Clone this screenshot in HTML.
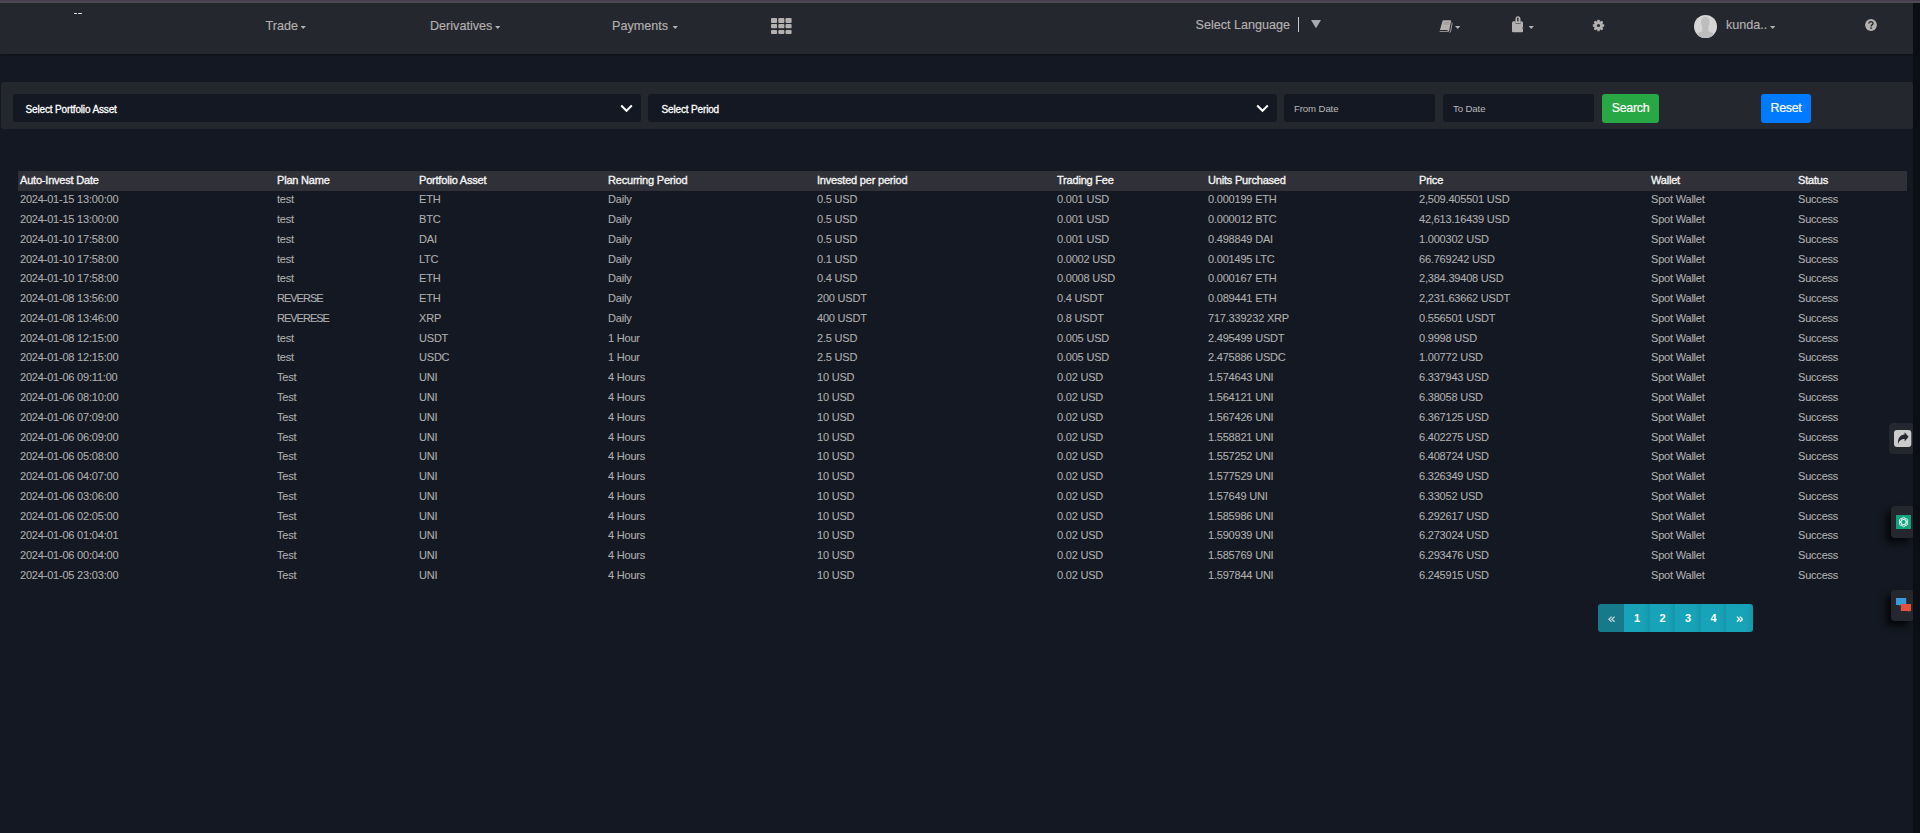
<!DOCTYPE html>
<html><head><meta charset="utf-8"><style>
*{box-sizing:border-box;margin:0;padding:0}
html,body{width:1920px;height:833px;overflow:hidden;background:#141822;font-family:"Liberation Sans",sans-serif}
.abs{position:absolute}
.nt{position:absolute;font-size:12.6px;color:#b4b0b0;white-space:nowrap;line-height:14px;-webkit-text-stroke:0.15px #b4b0b0}
.caret{position:absolute;width:5.4px;height:3px;background:#b4b0b0;clip-path:polygon(0 0,100% 0,50% 100%)}
.sel{position:absolute;top:94px;height:28px;background:#141822;border-radius:3px}
.selt{position:absolute;top:103.5px;font-size:10px;font-weight:normal;-webkit-text-stroke:0.3px #fff;color:#fff;white-space:nowrap;line-height:12px;letter-spacing:-0.15px}
.inpt{position:absolute;top:102.5px;font-size:9.6px;color:#b8b8b8;white-space:nowrap;line-height:12px;letter-spacing:-0.1px}
.btn{position:absolute;top:94px;height:29px;border-radius:3px;color:#fff;font-size:12.4px;line-height:29px;text-align:center;letter-spacing:-0.3px;-webkit-text-stroke:0.2px #fff}
.thead{position:absolute;left:18px;top:171px;width:1889px;height:20px;background:#2f3038}
.thead span{position:absolute;top:3px;font-size:11px;font-weight:normal;-webkit-text-stroke:0.35px #f4f4f4;color:#f4f4f4;white-space:nowrap;letter-spacing:-0.2px;line-height:13px}
.tr{position:absolute;left:0;width:1900px;height:20px}
.tr span{position:absolute;top:3px;font-size:11px;color:#aeaeae;-webkit-text-stroke:0.1px #aeaeae;white-space:nowrap;letter-spacing:-0.2px;line-height:13px}
#pag{position:absolute;left:1598px;top:604px;width:155px;height:28px;border-radius:3px;overflow:hidden}
#pag div{position:absolute;top:0;height:28px;background:linear-gradient(90deg,#17a3b9 0%,#17a2b8 75%,#1596aa 100%);color:#fff;font-size:11px;text-align:center;line-height:28px;font-weight:bold}
#pag div.d{background:#167a8a}
.side{position:absolute;background:#24272e;border-radius:4px}
</style></head><body>
<div class="abs" style="left:0;top:0;width:1920px;height:1px;background:#463a4f"></div>
<div class="abs" style="left:0;top:1px;width:1920px;height:2px;background:#4d4951"></div>
<div class="abs" style="left:0;top:3px;width:1913px;height:51px;background:#24272e;box-shadow:0 1px 2px rgba(0,0,0,.35)"></div>
<div class="abs" style="left:1px;top:82px;width:1912px;height:47px;background:#24272e;border-radius:3px"></div>
<div class="abs" style="left:74px;top:12.8px;width:3.2px;height:1.4px;background:#e8e8e8;border-radius:0.7px"></div><div class="abs" style="left:78.3px;top:12.8px;width:3.5px;height:1.4px;background:#e8e8e8;border-radius:0.7px"></div>
<div class="nt" style="left:265.5px;top:19px">Trade</div><div class="caret" style="left:300.5px;top:26px"></div>
<div class="nt" style="left:430px;top:19px">Derivatives</div><div class="caret" style="left:495px;top:26px"></div>
<div class="nt" style="left:612px;top:19px">Payments</div><div class="caret" style="left:672.5px;top:26px"></div>
<svg class="abs" style="left:770.5px;top:17.9px" width="22" height="17" viewBox="0 0 22 17"><g fill="#b4b0b0"><rect x="0" y="0" width="6.1" height="5" rx="1"/><rect x="7.3" y="0" width="6.1" height="5" rx="1"/><rect x="14.5" y="0" width="6.1" height="5" rx="1"/><rect x="0" y="6" width="6.1" height="4.2" rx="1"/><rect x="7.3" y="6" width="6.1" height="4.2" rx="1"/><rect x="14.5" y="6" width="6.1" height="4.2" rx="1"/><rect x="0" y="11.9" width="6.1" height="4.2" rx="1"/><rect x="7.3" y="11.9" width="6.1" height="4.2" rx="1"/><rect x="14.5" y="11.9" width="6.1" height="4.2" rx="1"/></g></svg>
<div class="nt" style="left:1195.5px;top:18px">Select Language</div>
<div class="abs" style="left:1298px;top:17px;width:1.3px;height:15px;background:#c8c8c8"></div>
<svg class="abs" style="left:1311px;top:20px" width="10" height="9" viewBox="0 0 10 9"><path d="M0 0H10L5 8.3Z" fill="#a9a9ad"/></svg>
<svg class="abs" style="left:1439px;top:19.6px" width="14" height="13" viewBox="0 0 14 13">
<path d="M3.6 0.7Q3.8 0.2 4.4 0.2H11.4Q12.2 0.2 12 1L10.2 10.8Q10 11.8 9.2 11.8H1.3Q0.4 11.8 0.6 10.9Z" fill="#b4b0b0"/>
<path d="M12.6 2.5Q13.2 2.6 13.1 3.3L11.5 11.6Q11.3 12.4 10.6 12.4" fill="none" stroke="#b4b0b0" stroke-width="0.9"/>
<rect x="1.4" y="10.0" width="8.6" height="0.9" fill="#24272e" transform="skewX(-8)"/>
<rect x="4.9" y="2.0" width="5.2" height="0.9" fill="#9a9595"/><rect x="4.6" y="3.6" width="5.2" height="0.9" fill="#9a9595"/>
</svg>
<div class="caret" style="left:1455px;top:26px"></div>
<svg class="abs" style="left:1512px;top:16px" width="12" height="17" viewBox="0 0 12 17">
<path d="M0 7Q0 5.3 1.5 5.3H3.6V8H8.4V5.3H9.6Q11 5.3 11 7V11Q11.8 11.3 11.4 12.3Q11 12.6 11 13V15.3Q11 16.3 10 16.3H1Q0 16.3 0 15.3Z" fill="#b4b0b0"/>
<path d="M5.9 0.2Q3.4 0.2 3.4 3.6V7.6H8.5V3.6Q8.5 0.2 5.9 0.2Z" fill="#b4b0b0"/>
<rect x="5.2" y="1.6" width="1.3" height="3.8" rx="0.6" fill="#24272e"/>
<circle cx="10.9" cy="11.9" r="0.7" fill="#24272e"/>
</svg>
<div class="caret" style="left:1528.5px;top:26px"></div>
<svg class="abs" style="left:1592.1px;top:18.5px" width="13" height="13" viewBox="0 0 13 13"><g fill="#b4b0b0"><circle cx="6.5" cy="6.5" r="4.5"/><rect x="5.35" y="0.75" width="2.3" height="5.75" rx="0.6" transform="rotate(0.0 6.5 6.5)"/><rect x="5.35" y="0.75" width="2.3" height="5.75" rx="0.6" transform="rotate(45.0 6.5 6.5)"/><rect x="5.35" y="0.75" width="2.3" height="5.75" rx="0.6" transform="rotate(90.0 6.5 6.5)"/><rect x="5.35" y="0.75" width="2.3" height="5.75" rx="0.6" transform="rotate(135.0 6.5 6.5)"/><rect x="5.35" y="0.75" width="2.3" height="5.75" rx="0.6" transform="rotate(180.0 6.5 6.5)"/><rect x="5.35" y="0.75" width="2.3" height="5.75" rx="0.6" transform="rotate(225.0 6.5 6.5)"/><rect x="5.35" y="0.75" width="2.3" height="5.75" rx="0.6" transform="rotate(270.0 6.5 6.5)"/><rect x="5.35" y="0.75" width="2.3" height="5.75" rx="0.6" transform="rotate(315.0 6.5 6.5)"/></g><circle cx="6.5" cy="6.5" r="1.55" fill="#24272e"/></svg>
<svg class="abs" style="left:1694px;top:15px" width="23" height="23" viewBox="0 0 23 23">
<defs><clipPath id="cc"><circle cx="11.5" cy="11.5" r="11.5"/></clipPath></defs>
<circle cx="11.5" cy="11.5" r="11.5" fill="#d6d6d6"/>
<g clip-path="url(#cc)" fill="#bdbdbd"><ellipse cx="11.3" cy="7.2" rx="4.3" ry="5.6"/><rect x="8.3" y="9" width="6" height="8"/><ellipse cx="11.5" cy="23" rx="10.5" ry="7"/></g>
</svg>
<div class="nt" style="left:1726px;top:18.4px">kunda..</div><div class="caret" style="left:1770px;top:26px"></div>
<svg class="abs" style="left:1864.6px;top:19.3px" width="12" height="12" viewBox="0 0 12 12">
<circle cx="6" cy="6" r="5.9" fill="#b4b0b0"/>
<path d="M3.9 4.5Q4 2.6 6.1 2.6Q8.1 2.7 8.1 4.3Q8.1 5.3 7 5.9Q6.1 6.4 6.1 7.5" fill="none" stroke="#24272e" stroke-width="1.35"/>
<circle cx="6.1" cy="9.1" r="0.85" fill="#24272e"/>
</svg>
<div class="sel" style="left:13px;width:628px"></div>
<div class="selt" style="left:25.5px">Select Portfolio Asset</div>
<svg class="abs" style="left:620px;top:104px" width="13" height="9" viewBox="0 0 13 9"><path d="M1.2 1.5L6.5 6.8L11.8 1.5" fill="none" stroke="#fff" stroke-width="2"/></svg>
<div class="sel" style="left:648px;width:629px"></div>
<div class="selt" style="left:661.5px">Select Period</div>
<svg class="abs" style="left:1256px;top:104px" width="13" height="9" viewBox="0 0 13 9"><path d="M1.2 1.5L6.5 6.8L11.8 1.5" fill="none" stroke="#fff" stroke-width="2"/></svg>
<div class="sel" style="left:1284px;width:151px"></div>
<div class="inpt" style="left:1294px">From Date</div>
<div class="sel" style="left:1443px;width:151px"></div>
<div class="inpt" style="left:1453px">To Date</div>
<div class="btn" style="left:1602px;width:57px;background:#28a745">Search</div>
<div class="btn" style="left:1761px;width:50px;background:#007bff">Reset</div>
<div class="thead"><span style="left:2px">Auto-Invest Date</span><span style="left:259px">Plan Name</span><span style="left:401px">Portfolio Asset</span><span style="left:590px">Recurring Period</span><span style="left:799px">Invested per period</span><span style="left:1039px">Trading Fee</span><span style="left:1190px">Units Purchased</span><span style="left:1401px">Price</span><span style="left:1633px">Wallet</span><span style="left:1780px">Status</span></div>
<div class="tr" style="top:190.30px"><span style="left:20px">2024-01-15 13:00:00</span><span style="left:277px">test</span><span style="left:419px">ETH</span><span style="left:608px">Daily</span><span style="left:817px">0.5 USD</span><span style="left:1057px">0.001 USD</span><span style="left:1208px">0.000199 ETH</span><span style="left:1419px">2,509.405501 USD</span><span style="left:1651px">Spot Wallet</span><span style="left:1798px">Success</span></div>
<div class="tr" style="top:210.07px"><span style="left:20px">2024-01-15 13:00:00</span><span style="left:277px">test</span><span style="left:419px">BTC</span><span style="left:608px">Daily</span><span style="left:817px">0.5 USD</span><span style="left:1057px">0.001 USD</span><span style="left:1208px">0.000012 BTC</span><span style="left:1419px">42,613.16439 USD</span><span style="left:1651px">Spot Wallet</span><span style="left:1798px">Success</span></div>
<div class="tr" style="top:229.84px"><span style="left:20px">2024-01-10 17:58:00</span><span style="left:277px">test</span><span style="left:419px">DAI</span><span style="left:608px">Daily</span><span style="left:817px">0.5 USD</span><span style="left:1057px">0.001 USD</span><span style="left:1208px">0.498849 DAI</span><span style="left:1419px">1.000302 USD</span><span style="left:1651px">Spot Wallet</span><span style="left:1798px">Success</span></div>
<div class="tr" style="top:249.61px"><span style="left:20px">2024-01-10 17:58:00</span><span style="left:277px">test</span><span style="left:419px">LTC</span><span style="left:608px">Daily</span><span style="left:817px">0.1 USD</span><span style="left:1057px">0.0002 USD</span><span style="left:1208px">0.001495 LTC</span><span style="left:1419px">66.769242 USD</span><span style="left:1651px">Spot Wallet</span><span style="left:1798px">Success</span></div>
<div class="tr" style="top:269.38px"><span style="left:20px">2024-01-10 17:58:00</span><span style="left:277px">test</span><span style="left:419px">ETH</span><span style="left:608px">Daily</span><span style="left:817px">0.4 USD</span><span style="left:1057px">0.0008 USD</span><span style="left:1208px">0.000167 ETH</span><span style="left:1419px">2,384.39408 USD</span><span style="left:1651px">Spot Wallet</span><span style="left:1798px">Success</span></div>
<div class="tr" style="top:289.15px"><span style="left:20px">2024-01-08 13:56:00</span><span style="left:277px;letter-spacing:-1px">REVERSE</span><span style="left:419px">ETH</span><span style="left:608px">Daily</span><span style="left:817px">200 USDT</span><span style="left:1057px">0.4 USDT</span><span style="left:1208px">0.089441 ETH</span><span style="left:1419px">2,231.63662 USDT</span><span style="left:1651px">Spot Wallet</span><span style="left:1798px">Success</span></div>
<div class="tr" style="top:308.92px"><span style="left:20px">2024-01-08 13:46:00</span><span style="left:277px;letter-spacing:-1px">REVERESE</span><span style="left:419px">XRP</span><span style="left:608px">Daily</span><span style="left:817px">400 USDT</span><span style="left:1057px">0.8 USDT</span><span style="left:1208px">717.339232 XRP</span><span style="left:1419px">0.556501 USDT</span><span style="left:1651px">Spot Wallet</span><span style="left:1798px">Success</span></div>
<div class="tr" style="top:328.69px"><span style="left:20px">2024-01-08 12:15:00</span><span style="left:277px">test</span><span style="left:419px">USDT</span><span style="left:608px">1 Hour</span><span style="left:817px">2.5 USD</span><span style="left:1057px">0.005 USD</span><span style="left:1208px">2.495499 USDT</span><span style="left:1419px">0.9998 USD</span><span style="left:1651px">Spot Wallet</span><span style="left:1798px">Success</span></div>
<div class="tr" style="top:348.46px"><span style="left:20px">2024-01-08 12:15:00</span><span style="left:277px">test</span><span style="left:419px">USDC</span><span style="left:608px">1 Hour</span><span style="left:817px">2.5 USD</span><span style="left:1057px">0.005 USD</span><span style="left:1208px">2.475886 USDC</span><span style="left:1419px">1.00772 USD</span><span style="left:1651px">Spot Wallet</span><span style="left:1798px">Success</span></div>
<div class="tr" style="top:368.23px"><span style="left:20px">2024-01-06 09:11:00</span><span style="left:277px">Test</span><span style="left:419px">UNI</span><span style="left:608px">4 Hours</span><span style="left:817px">10 USD</span><span style="left:1057px">0.02 USD</span><span style="left:1208px">1.574643 UNI</span><span style="left:1419px">6.337943 USD</span><span style="left:1651px">Spot Wallet</span><span style="left:1798px">Success</span></div>
<div class="tr" style="top:388.00px"><span style="left:20px">2024-01-06 08:10:00</span><span style="left:277px">Test</span><span style="left:419px">UNI</span><span style="left:608px">4 Hours</span><span style="left:817px">10 USD</span><span style="left:1057px">0.02 USD</span><span style="left:1208px">1.564121 UNI</span><span style="left:1419px">6.38058 USD</span><span style="left:1651px">Spot Wallet</span><span style="left:1798px">Success</span></div>
<div class="tr" style="top:407.77px"><span style="left:20px">2024-01-06 07:09:00</span><span style="left:277px">Test</span><span style="left:419px">UNI</span><span style="left:608px">4 Hours</span><span style="left:817px">10 USD</span><span style="left:1057px">0.02 USD</span><span style="left:1208px">1.567426 UNI</span><span style="left:1419px">6.367125 USD</span><span style="left:1651px">Spot Wallet</span><span style="left:1798px">Success</span></div>
<div class="tr" style="top:427.54px"><span style="left:20px">2024-01-06 06:09:00</span><span style="left:277px">Test</span><span style="left:419px">UNI</span><span style="left:608px">4 Hours</span><span style="left:817px">10 USD</span><span style="left:1057px">0.02 USD</span><span style="left:1208px">1.558821 UNI</span><span style="left:1419px">6.402275 USD</span><span style="left:1651px">Spot Wallet</span><span style="left:1798px">Success</span></div>
<div class="tr" style="top:447.31px"><span style="left:20px">2024-01-06 05:08:00</span><span style="left:277px">Test</span><span style="left:419px">UNI</span><span style="left:608px">4 Hours</span><span style="left:817px">10 USD</span><span style="left:1057px">0.02 USD</span><span style="left:1208px">1.557252 UNI</span><span style="left:1419px">6.408724 USD</span><span style="left:1651px">Spot Wallet</span><span style="left:1798px">Success</span></div>
<div class="tr" style="top:467.08px"><span style="left:20px">2024-01-06 04:07:00</span><span style="left:277px">Test</span><span style="left:419px">UNI</span><span style="left:608px">4 Hours</span><span style="left:817px">10 USD</span><span style="left:1057px">0.02 USD</span><span style="left:1208px">1.577529 UNI</span><span style="left:1419px">6.326349 USD</span><span style="left:1651px">Spot Wallet</span><span style="left:1798px">Success</span></div>
<div class="tr" style="top:486.85px"><span style="left:20px">2024-01-06 03:06:00</span><span style="left:277px">Test</span><span style="left:419px">UNI</span><span style="left:608px">4 Hours</span><span style="left:817px">10 USD</span><span style="left:1057px">0.02 USD</span><span style="left:1208px">1.57649 UNI</span><span style="left:1419px">6.33052 USD</span><span style="left:1651px">Spot Wallet</span><span style="left:1798px">Success</span></div>
<div class="tr" style="top:506.62px"><span style="left:20px">2024-01-06 02:05:00</span><span style="left:277px">Test</span><span style="left:419px">UNI</span><span style="left:608px">4 Hours</span><span style="left:817px">10 USD</span><span style="left:1057px">0.02 USD</span><span style="left:1208px">1.585986 UNI</span><span style="left:1419px">6.292617 USD</span><span style="left:1651px">Spot Wallet</span><span style="left:1798px">Success</span></div>
<div class="tr" style="top:526.39px"><span style="left:20px">2024-01-06 01:04:01</span><span style="left:277px">Test</span><span style="left:419px">UNI</span><span style="left:608px">4 Hours</span><span style="left:817px">10 USD</span><span style="left:1057px">0.02 USD</span><span style="left:1208px">1.590939 UNI</span><span style="left:1419px">6.273024 USD</span><span style="left:1651px">Spot Wallet</span><span style="left:1798px">Success</span></div>
<div class="tr" style="top:546.16px"><span style="left:20px">2024-01-06 00:04:00</span><span style="left:277px">Test</span><span style="left:419px">UNI</span><span style="left:608px">4 Hours</span><span style="left:817px">10 USD</span><span style="left:1057px">0.02 USD</span><span style="left:1208px">1.585769 UNI</span><span style="left:1419px">6.293476 USD</span><span style="left:1651px">Spot Wallet</span><span style="left:1798px">Success</span></div>
<div class="tr" style="top:565.93px"><span style="left:20px">2024-01-05 23:03:00</span><span style="left:277px">Test</span><span style="left:419px">UNI</span><span style="left:608px">4 Hours</span><span style="left:817px">10 USD</span><span style="left:1057px">0.02 USD</span><span style="left:1208px">1.597844 UNI</span><span style="left:1419px">6.245915 USD</span><span style="left:1651px">Spot Wallet</span><span style="left:1798px">Success</span></div>
<div id="pag"><div class="d" style="left:0px;width:26px"></div><div style="left:26px;width:26px">1</div><div style="left:52px;width:25px">2</div><div style="left:77px;width:26px">3</div><div style="left:103px;width:25px">4</div><div style="left:128px;width:27px"></div></div>
<svg class="abs" style="left:1608px;top:615.5px" width="7.5" height="6.5" viewBox="0 0 7.5 6.5"><path d="M3.6 0.6L0.9 3.2L3.6 5.8M6.6 0.6L3.9 3.2L6.6 5.8" fill="none" stroke="#c3d4d7" stroke-width="1.3"/></svg>
<svg class="abs" style="left:1735.7px;top:615.5px" width="7.5" height="6.5" viewBox="0 0 7.5 6.5"><path d="M0.9 0.6L3.6 3.2L0.9 5.8M3.9 0.6L6.6 3.2L3.9 5.8" fill="none" stroke="#fff" stroke-width="1.3"/></svg>
<div class="side" style="left:1889px;top:423px;width:25px;height:31px"></div>
<svg class="abs" style="left:1894.4px;top:429.8px" width="17.3" height="17" viewBox="0 0 17.3 17">
<rect width="17.3" height="17" rx="3" fill="#cbcbcb"/>
<path d="M14.6 6.8L10.6 2.2V4.6C6.4 4.9 3.7 7.6 4 14.2C5 10.4 7.3 9 10.6 9V11.4Z" fill="#24272e"/>
</svg>
<div class="side" style="left:1891px;top:506px;width:23px;height:32px;box-shadow:-5px 5px 7px rgba(0,0,0,.75)"></div>
<svg class="abs" style="left:1895.8px;top:515px" width="15.2" height="14" viewBox="0 0 15.2 14">
<rect width="15.2" height="14" fill="#12a27f"/>
<g fill="none" stroke="#fff" stroke-width="0.75">
<ellipse cx="7.6" cy="7" rx="2.4" ry="4.8"/><ellipse cx="7.6" cy="7" rx="2.4" ry="4.8" transform="rotate(60 7.6 7)"/><ellipse cx="7.6" cy="7" rx="2.4" ry="4.8" transform="rotate(-60 7.6 7)"/>
</g></svg>
<div class="side" style="left:1891px;top:590.3px;width:23px;height:30.5px;box-shadow:-5px 5px 7px rgba(0,0,0,.75)"></div>
<svg class="abs" style="left:1896px;top:598px" width="15.5" height="14.5" viewBox="0 0 15.5 14.5">
<path d="M0 0H10.2V6.9H4.4L3.2 8.2V6.9H0Z" fill="#3a9ad9"/>
<path d="M4.8 6H15V13.1H13.2V14.2L12 13.1H4.8Z" fill="#e4503a"/>
</svg>
<div class="abs" style="left:1913px;top:3px;width:7px;height:830px;background:#0c0e15"></div>
</body></html>
